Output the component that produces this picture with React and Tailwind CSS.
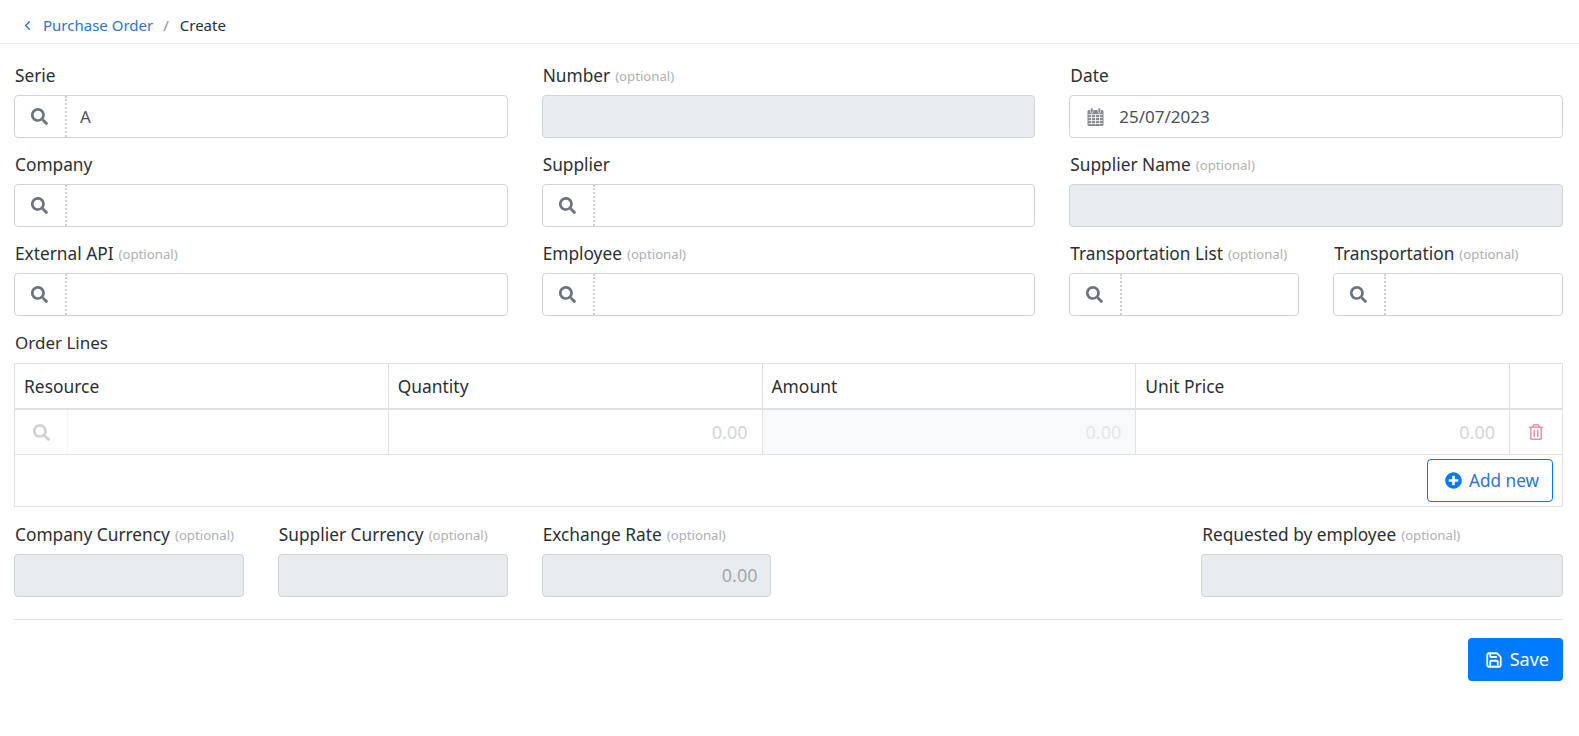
import { FaSearch, FaRegTrashAlt, FaPlusCircle } from "react-icons/fa";
import { FiChevronLeft } from "react-icons/fi";
import { Save } from "lucide-react";

const Field = ({ label, optional, className = "", children }) => (
    <div className={className}>
        <label className="block h-[23px] mb-[8px] pl-[1px] text-[17.3px] leading-[23px] text-[#2b2f33] whitespace-nowrap">
            {label}
            {optional && <span className="ml-[5px] align-[1px] text-[13.2px] text-[#adb0b3]">(optional)</span>}
        </label>
        {children}
    </div>
);

const Lookup = ({ value }) => (
    <div className="flex h-[43px] bg-white border border-[#ced4da] rounded">
        <div className="w-[52px] pr-[1px] flex items-center justify-center border-r-2 border-dotted border-[#cfcfcf] text-[#6c757d]">
            <FaSearch size={17} />
        </div>
        <div className="flex-1 pl-[13px] pr-3 flex items-center text-[17px] text-[#495057]">{value}</div>
    </div>
);

const Disabled = ({ value }) => (
    <div className="flex h-[43px] items-center justify-end px-[13px] bg-[#e9ecef] border border-[#ced4da] rounded text-[18px] text-[#a3a8ad]">
        {value}
    </div>
);

// calendario relleno con anillas, el paquete de iconos no trae uno igual
const CalendarIcon = () => (
    <svg width="17" height="18" viewBox="0 0 17 18" className="text-[#868a8e] mr-[15px]" fill="currentColor">
        <rect x="0.5" y="2" width="16" height="16" rx="1.5" />
        <rect x="3.5" y="0" width="2.5" height="5" rx="1" stroke="#fff" strokeWidth="0.6" />
        <rect x="11" y="0" width="2.5" height="5" rx="1" stroke="#fff" strokeWidth="0.6" />
        <path d="M1.5 6.5h14M1.5 9.5h14M1.5 12.5h14M1.5 15.5h14M4.5 6.5v10M8.5 6.5v10M12.5 6.5v10" stroke="#fff" strokeWidth="0.8" fill="none" />
    </svg>
);

export default function App() {
    return (
        <div className="min-h-[736px] bg-white font-['Noto_Sans',sans-serif]">
            <div className="h-[44px] flex items-center pt-[8px] pl-[20px] border-b border-[#eeeff1] text-[15px]">
                <FiChevronLeft size={15} className="text-[#1f6fd6] mr-[8px]" />
                <a className="text-[#2f74d0]">Purchase Order</a>
                <span className="ml-[10px] mr-[11px] text-[#8a8f94]">/</span>
                <span className="text-[#2b2f33]">Create</span>
            </div>

            <div className="pl-[14px] pr-[16px] pt-[20px]">
                <div className="grid grid-cols-12 gap-x-[34px] gap-y-[15px]">
                    <Field label="Serie" className="col-span-4"><Lookup value="A" /></Field>
                    <Field label="Number" optional className="col-span-4"><Disabled /></Field>
                    <Field label="Date" className="col-span-4">
                        <div className="flex h-[43px] items-center bg-white border border-[#ced4da] rounded pl-[17px] text-[17px] text-[#495057]">
                            <CalendarIcon />
                            25/07/2023
                        </div>
                    </Field>

                    <Field label="Company" className="col-span-4"><Lookup /></Field>
                    <Field label="Supplier" className="col-span-4"><Lookup /></Field>
                    <Field label="Supplier Name" optional className="col-span-4"><Disabled /></Field>

                    <Field label="External API" optional className="col-span-4"><Lookup /></Field>
                    <Field label="Employee" optional className="col-span-4"><Lookup /></Field>
                    <Field label="Transportation List" optional className="col-span-2"><Lookup /></Field>
                    <Field label="Transportation" optional className="col-span-2"><Lookup /></Field>
                </div>

                <div className="mt-[15px] h-[23px] mb-[9px] pl-[1px] text-[17px] leading-[23px] text-[#2b2f33]">Order Lines</div>
                <div className="border border-[#dee2e6] text-[17.4px]">
                    <div className="grid grid-cols-[1fr_1fr_1fr_1fr_52px] h-[46px] border-b-2 border-[#dee2e6] text-[#2b2f33]">
                        <div className="flex items-center pl-[9px] border-r border-[#dee2e6]">Resource</div>
                        <div className="flex items-center pl-[9px] border-r border-[#dee2e6]">Quantity</div>
                        <div className="flex items-center pl-[9px] border-r border-[#dee2e6]">Amount</div>
                        <div className="flex items-center pl-[9px] border-r border-[#dee2e6]">Unit Price</div>
                        <div />
                    </div>
                    <div className="grid grid-cols-[1fr_1fr_1fr_1fr_52px] h-[45px] border-b border-[#dee2e6] text-[18px] text-[#d3d5d7]">
                        <div className="flex border-r border-[#dee2e6]">
                            <div className="w-[53px] flex items-center justify-center border-r border-dotted border-[#eeeeee] text-[#d0d2d4]">
                                <FaSearch size={17} />
                            </div>
                        </div>
                        <div className="flex items-center justify-end pr-[14px] border-r border-[#dee2e6]">0.00</div>
                        <div className="flex items-center justify-end pr-[14px] border-r border-[#dee2e6] bg-[#f8f9fa] text-[#e4e6e8]">0.00</div>
                        <div className="flex items-center justify-end pr-[14px] border-r border-[#dee2e6]">0.00</div>
                        <div className="flex items-center justify-center text-[#e9939c]"><FaRegTrashAlt size={16} /></div>
                    </div>
                    <div className="h-[51px] flex justify-end items-start pt-[4px] pr-[9px]">
                        <button className="h-[43px] pl-[17px] pr-[13px] flex items-center gap-[7px] border border-[#007bff] rounded text-[17.2px] text-[#2f74d0]">
                            <FaPlusCircle size={17} className="text-[#007bff]" />
                            Add new
                        </button>
                    </div>
                </div>

                <div className="grid grid-cols-12 gap-x-[34px] mt-[16px]">
                    <Field label="Company Currency" optional className="col-span-2"><Disabled /></Field>
                    <Field label="Supplier Currency" optional className="col-span-2"><Disabled /></Field>
                    <Field label="Exchange Rate" optional className="col-span-2"><Disabled value="0.00" /></Field>
                    <Field label="Requested by employee" optional className="col-span-3 col-start-10"><Disabled /></Field>
                </div>

                <div className="mt-[22px] border-t border-[#dee2e6]" />
                <div className="mt-[18px] flex justify-end">
                    <button className="h-[43px] pl-[17px] pr-[14px] flex items-center gap-[7px] bg-[#007bff] rounded text-[18px] text-white">
                        <Save size={18} strokeWidth={2.4} />
                        Save
                    </button>
                </div>
            </div>
        </div>
    );
}
